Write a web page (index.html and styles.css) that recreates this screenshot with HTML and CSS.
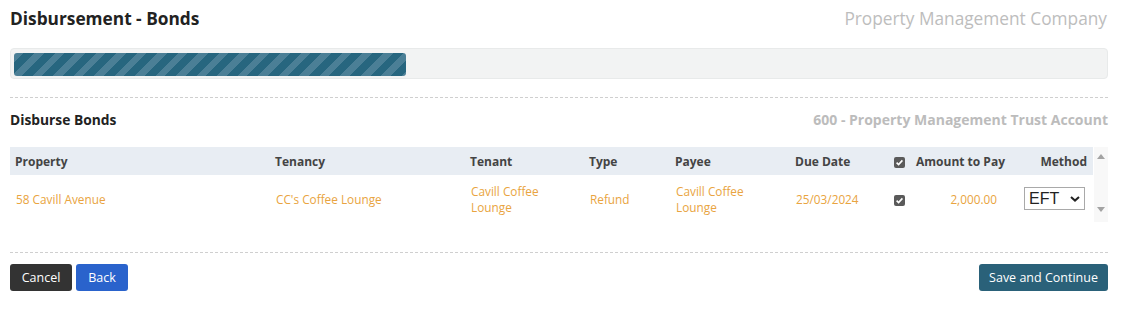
FILE: index.html
```html
<!DOCTYPE html>
<html>
<head>
<meta charset="utf-8">
<link rel="stylesheet" href="styles.css">
</head>
<body>
<div class="page">
  <div class="top">
    <h1 class="title">Disbursement - Bonds</h1>
    <div class="company">Property Management Company</div>
  </div>
  <div class="progress"><div class="progress-bar" style="width:392px"></div></div>
  <div class="rule rule-a"></div>
  <div class="section-head">
    <h2 class="section-title">Disburse Bonds</h2>
    <div class="account">600 - Property Management Trust Account</div>
  </div>
  <div class="grid-wrap">
    <table class="grid">
      <colgroup>
        <col style="width:260px"><col style="width:195px"><col style="width:119px"><col style="width:86px"><col style="width:120px"><col style="width:99px"><col style="width:22px"><col style="width:94px"><col style="width:88px">
      </colgroup>
      <thead>
        <tr>
          <th>Property</th><th>Tenancy</th><th>Tenant</th><th>Type</th><th>Payee</th><th>Due Date</th>
          <th class="chk-cell"><span class="chk"><svg viewBox="0 0 11 11" width="11" height="11"><path d="M2.6 5.6 L4.6 7.6 L8.4 3.4" fill="none" stroke="#fff" stroke-width="1.6"/></svg></span></th>
          <th class="num">Amount to Pay</th><th class="num">Method</th>
        </tr>
      </thead>
      <tbody>
        <tr>
          <td>58 Cavill Avenue</td>
          <td>CC's Coffee Lounge</td>
          <td>Cavill Coffee Lounge</td>
          <td>Refund</td>
          <td>Cavill Coffee Lounge</td>
          <td>25/03/2024</td>
          <td class="chk-cell"><span class="chk"><svg viewBox="0 0 11 11" width="11" height="11"><path d="M2.6 5.6 L4.6 7.6 L8.4 3.4" fill="none" stroke="#fff" stroke-width="1.6"/></svg></span></td>
          <td class="num">2,000.00</td>
          <td class="num"><span class="select">EFT<svg viewBox="0 0 10 6" width="10" height="6"><path d="M1 1 L5 4.6 L9 1" fill="none" stroke="#222" stroke-width="2"/></svg></span></td>
        </tr>
      </tbody>
    </table>
    <div class="scroll">
      <span class="arrow up"></span>
      <span class="arrow down"></span>
    </div>
  </div>
  <div class="rule rule-b"></div>
  <div class="actions">
    <div class="left-actions">
      <button class="btn btn-dark">Cancel</button>
      <button class="btn btn-blue">Back</button>
    </div>
    <button class="btn btn-teal">Save and Continue</button>
  </div>
</div>
</body>
</html>
```
FILE: styles.css
```css
html, body {
  margin: 0;
  padding: 0;
  background: #fff;
}
body {
  font-family: "Open Sans", "Noto Sans", sans-serif;
  color: #222;
}
.page {
  width: 1098px;
  margin-left: 10px;
}
.top {
  display: flex;
  justify-content: space-between;
  align-items: center;
  height: 36px;
}
.title {
  margin: 0;
  font-size: 17.3px;
  font-weight: 700;
  color: #222;
}
.company {
  font-size: 17.3px;
  color: #bdbdbd;
  margin-right: 1px;
}
.progress {
  margin-top: 12px;
  background: #f2f3f3;
  border: 1px solid #e8eaea;
  border-radius: 4px;
  padding: 4px 3px;
  box-sizing: border-box;
  height: 31px;
}
.progress-bar {
  height: 23px;
  border-radius: 3px;
  background: repeating-linear-gradient(135deg, #4b7f96 0 7px, #27667f 7px 14.5px);
}
.rule {
  border-top: 1px dashed #cfcfcf;
}
.rule-a {
  margin-top: 18px;
}
.section-head {
  display: flex;
  justify-content: space-between;
  align-items: center;
  height: 43px;
}
.section-title {
  margin: 0;
  font-size: 13.8px;
  font-weight: 700;
  color: #222;
}
.account {
  font-size: 14px;
  font-weight: 700;
  color: #bcbcbc;
}
.grid-wrap {
  display: flex;
  margin-top: 6px;
}
.grid {
  border-collapse: collapse;
  table-layout: fixed;
  width: 1083px;
}
.grid th {
  background: #e8edf3;
  height: 28px;
  padding: 0 5px;
  text-align: left;
  font-size: 12px;
  font-weight: 700;
  color: #444;
  white-space: nowrap;
}
.grid td {
  height: 47px;
  padding: 0 6px;
  font-size: 11.8px;
  line-height: 16px;
  color: #e9a440;
}
.grid th.num, .grid td.num {
  text-align: right;
}
.grid td.num {
  padding-right: 8px;
}
.grid td:last-child {
  padding-right: 8px;
}
.grid th:last-child {
  padding-right: 6px;
}
.grid .chk-cell {
  padding: 0 0 0 5px;
  text-align: left;
}
.chk {
  display: inline-flex;
  width: 11px;
  height: 11px;
  background: #5a5a5a;
  border-radius: 2px;
  vertical-align: middle;
}
.select {
  display: inline-flex;
  align-items: center;
  justify-content: space-between;
  box-sizing: border-box;
  width: 61px;
  height: 23px;
  padding: 0 4px 0 4px;
  border: 1px solid #a9a9a9;
  background: #fff;
  font-family: "Liberation Sans", Arial, sans-serif;
  font-size: 16px;
  color: #222;
}
.scroll {
  width: 14px;
  margin-left: 1px;
  background: #f8f8f8;
  position: relative;
  height: 75px;
}
.arrow {
  position: absolute;
  left: 3px;
  width: 0;
  height: 0;
  border-left: 4px solid transparent;
  border-right: 4px solid transparent;
}
.arrow.up {
  top: 7px;
  border-bottom: 5px solid #a3a3a3;
}
.arrow.down {
  top: 60px;
  border-top: 5px solid #a3a3a3;
}
.rule-b {
  margin-top: 30px;
}
.actions {
  display: flex;
  justify-content: space-between;
  margin-top: 11px;
}
.left-actions {
  display: flex;
  gap: 4px;
}
.btn {
  height: 27px;
  border: none;
  border-radius: 3px;
  color: #fff;
  font-family: "Open Sans", "Noto Sans", sans-serif;
  font-size: 12.5px;
  padding: 0;
  cursor: pointer;
}
.btn-dark {
  background: #333;
  width: 62px;
}
.btn-blue {
  background: #2a63cc;
  width: 52px;
}
.btn-teal {
  background: #2a6179;
  width: 129px;
}
```
